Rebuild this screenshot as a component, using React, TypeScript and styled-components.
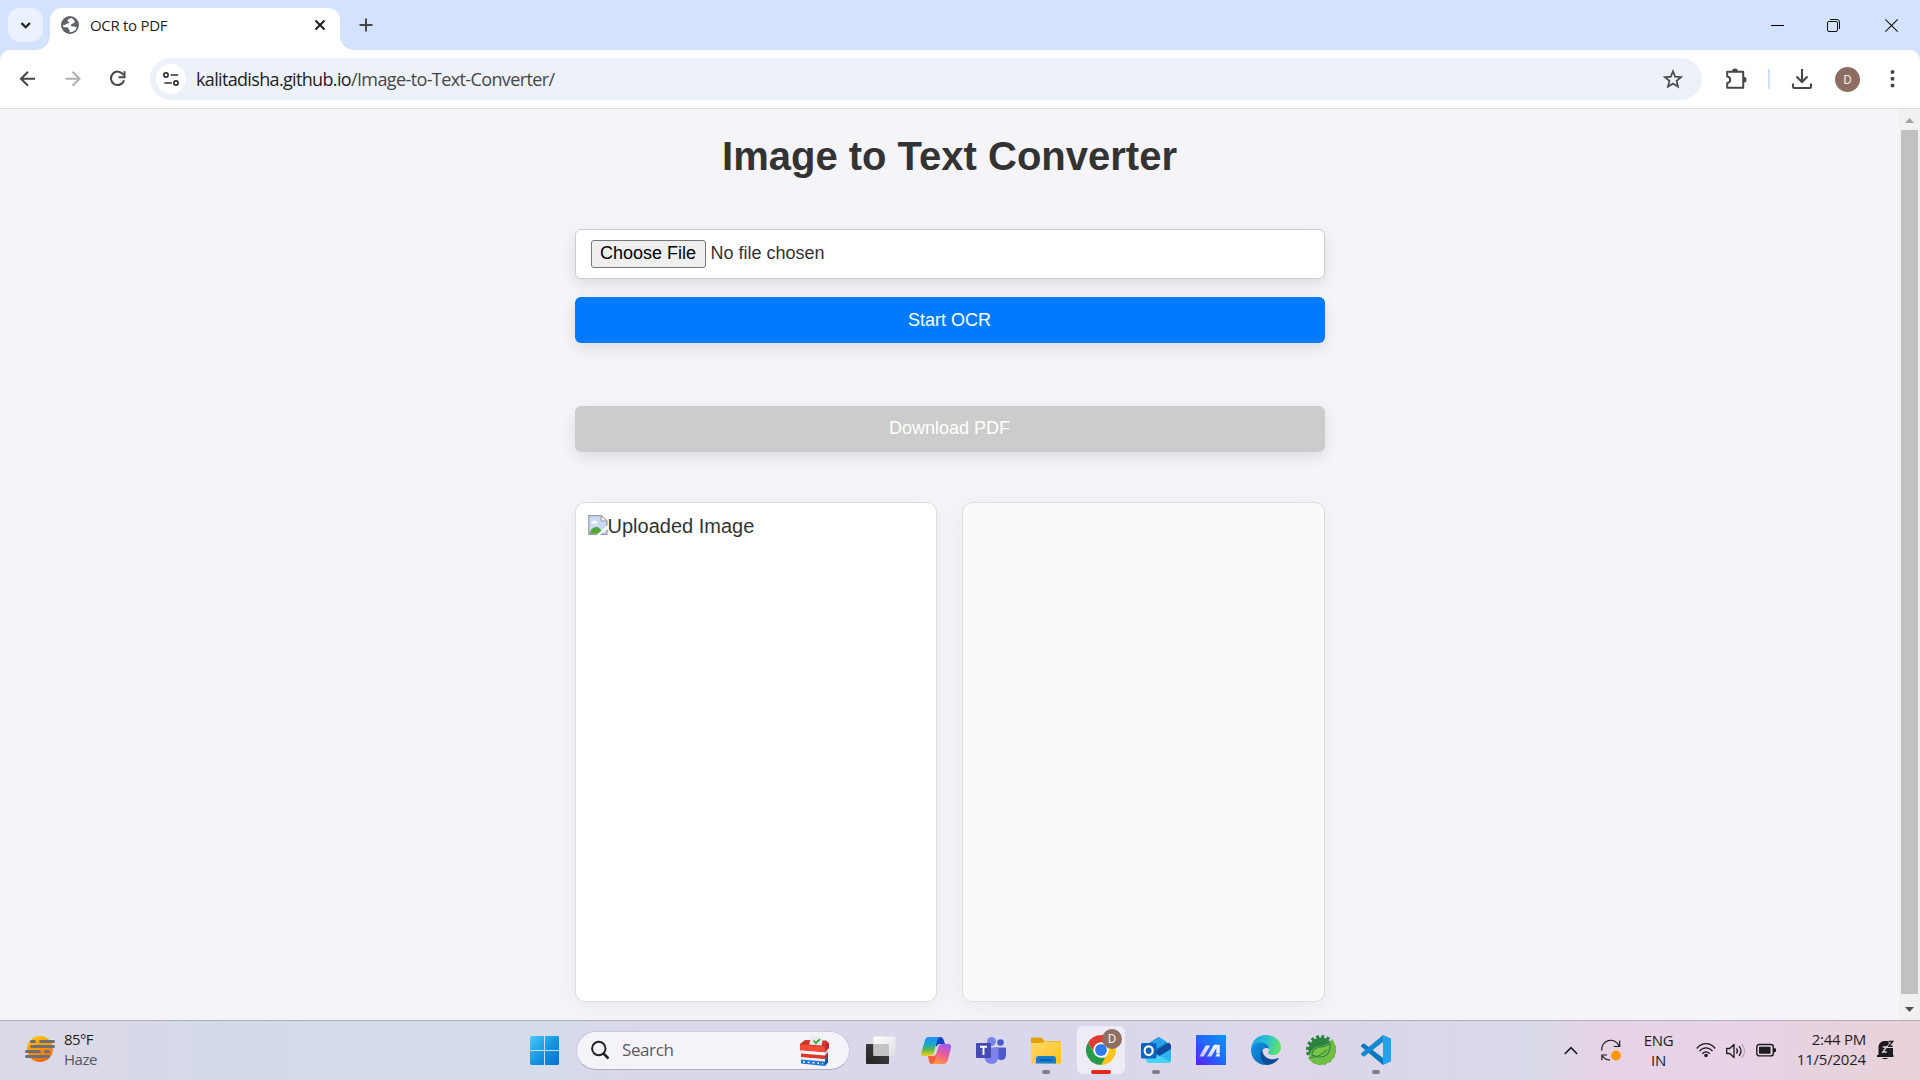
import React from 'react';
import styled, { createGlobalStyle, css } from 'styled-components';

const ui = `"Open Sans", "Noto Sans", sans-serif`;
const arial = `"Liberation Sans", Arial, sans-serif`;

const GlobalStyle = createGlobalStyle`
  *, *::before, *::after { box-sizing: border-box; }
  html, body { margin: 0; overflow: hidden; }
  svg { display: block; flex: none; overflow: visible; }
`;

const Screen = styled.div`
  width: 1920px;
  height: 1080px;
  display: flex;
  flex-direction: column;
  overflow: hidden;
  background: #d3e3fd;
  font-family: ${ui};
`;

const Label = styled.span<{ $size: number; $spacing?: number; $color?: string; $lh?: number }>`
  font-size: ${p => p.$size}px;
  letter-spacing: ${p => p.$spacing ?? 0}px;
  color: ${p => p.$color ?? '#1f1f1f'};
  line-height: ${p => p.$lh ?? 20}px;
  white-space: pre;
`;

/* ---------- tab strip ---------- */
const TabStrip = styled.div`
  height: 50px;
  flex: none;
  display: flex;
  padding: 8px 0 0 8px;
`;
const TabSearch = styled.div`
  width: 35px;
  height: 34px;
  border-radius: 12px;
  background: #ebf1fe;
  display: grid;
  place-items: center;
`;
const Tab = styled.div`
  position: relative;
  width: 290px;
  height: 42px;
  margin-left: 7px;
  padding: 0 13px 8px 11px;
  border-radius: 12px 12px 0 0;
  background: #fff;
  display: flex;
  align-items: center;
  gap: 11px;
  &::before, &::after {
    content: '';
    position: absolute;
    bottom: 0;
    width: 14px;
    height: 14px;
  }
  &::before { left: -14px; background: radial-gradient(circle at 0 0, transparent 13.5px, #fff 14.2px); }
  &::after { right: -14px; background: radial-gradient(circle at 100% 0, transparent 13.5px, #fff 14.2px); }
`;
const TabTitle = styled.div`
  flex: 1;
  display: flex;
`;
const NewTab = styled.div`
  width: 34px;
  height: 34px;
  margin-left: 9px;
  display: grid;
  place-items: center;
`;
const WindowButtons = styled.div`
  margin-left: auto;
  height: 34px;
  display: flex;
  align-items: center;
  gap: 43px;
  padding-right: 22px;
  & > :last-child { margin-left: 2px; }
`;

/* ---------- toolbar ---------- */
const Toolbar = styled.div`
  height: 59px;
  flex: none;
  display: flex;
  align-items: center;
  padding: 0 18px;
  background: #fff;
  border-radius: 10px 10px 0 0;
  border-bottom: 1px solid #dcdde0;
`;
const NavIcons = styled.div`
  display: flex;
  gap: 25px;
  width: 132px;
`;
const Omnibox = styled.div`
  width: 1552px;
  height: 42px;
  border-radius: 21px;
  padding: 0 19px 0 6px;
  background: #ecf1fa;
  display: flex;
  align-items: center;
`;
const SiteInfo = styled.div`
  width: 30px;
  height: 30px;
  border-radius: 50%;
  background: #fff;
  display: grid;
  place-items: center;
  margin-right: 10px;
`;
const Url = styled.div`
  flex: 1;
  display: flex;
  padding-bottom: 1px;
`;
const ToolbarEnd = styled.div`
  flex: 1;
  display: flex;
  align-items: center;
  padding-left: 23px;
`;
const Divider = styled.div`
  width: 2px;
  height: 20px;
  margin: 0 22px 0 21px;
  background: #cfe0fc;
`;
const Avatar = styled.div<{ $size: number }>`
  width: ${p => p.$size}px;
  height: ${p => p.$size}px;
  border-radius: 50%;
  background: #8d6e63;
  color: #f1e9e6;
  font: 400 13px/${p => p.$size}px Roboto, ${ui};
  text-align: center;
`;

/* ---------- web page ---------- */
const Viewport = styled.div`
  flex: 1;
  min-height: 0;
  display: flex;
  background: #f4f4f9;
`;
const Page = styled.main`
  flex: 1;
  display: flex;
  flex-direction: column;
  align-items: center;
  padding-top: 24px;
  color: #333;
  font-family: ${arial};
`;
const Title = styled.h1`
  margin: 0 0 50px;
  font-size: 40px;
  line-height: 46px;
  font-weight: 700;
`;
const shadow = css`box-shadow: 0 5px 15px rgba(0, 0, 0, 0.1);`;
const FileField = styled.div`
  width: 750px;
  height: 50px;
  padding: 0 15px;
  border: 1px solid #ccc;
  border-radius: 6px;
  background: #fff;
  ${shadow}
  display: flex;
  align-items: center;
  gap: 5px;
  font-size: 18px;
  line-height: 20px;
`;
const ChooseFile = styled.button`
  width: 115px;
  height: 28px;
  padding: 0 0 2px;
  border: 1px solid #767676;
  border-radius: 3px;
  background: #efefef;
  color: #000;
  font: 18px/20px ${arial};
  white-space: nowrap;
`;
const FileName = styled.span`
  padding-bottom: 2px;
`;
const Action = styled.button<{ $disabled?: boolean }>`
  width: 750px;
  height: 46px;
  margin-top: ${p => (p.$disabled ? 63 : 18)}px;
  padding: 0 0 ${p => (p.$disabled ? 3 : 1)}px;
  border: 0;
  border-radius: 6px;
  background: ${p => (p.$disabled ? '#ccc' : '#007bff')};
  color: #fff;
  font: 18px/20px ${arial};
  ${shadow}
`;
const Panels = styled.div`
  width: 750px;
  margin-top: 50px;
  display: grid;
  grid-template-columns: 1fr 1fr;
  gap: 25px;
`;
const Panel = styled.div<{ $bg: string }>`
  height: 500px;
  padding: 12px;
  border: 1px solid #ddd;
  border-radius: 10px;
  background: ${p => p.$bg};
  box-shadow: 0 5px 25px rgba(0, 0, 0, 0.05);
`;
const BrokenImage = styled.div`
  display: flex;
  font-size: 20px;
  line-height: 23px;
`;

const Scrollbar = styled.div`
  position: relative;
  width: 21px;
  background: #f1f1f1;
  display: flex;
  flex-direction: column;
  align-items: center;
`;
const Arrow = styled.div<{ $end?: boolean }>`
  height: ${p => (p.$end ? 26 : 21)}px;
  padding-top: ${p => (p.$end ? 4 : 2)}px;
  display: grid;
  place-items: center;
`;
const Thumb = styled.div`
  width: 17px;
  height: 864px;
  background: #c1c1c1;
`;

/* ---------- taskbar ---------- */
const Taskbar = styled.footer`
  height: 60px;
  flex: none;
  display: grid;
  grid-template-columns: 530px 861px 1fr;
  border-top: 1px solid #aeafb9;
  background: linear-gradient(90deg, #dbd9e8 0, #d9d9e8 120px, #d5dae9 200px, #d4dce9 520px, #d9d8ea 640px, #d8d8ea 1080px, #ddd7e9 1260px, #dcd7e8 1380px, #d9dae9 1530px, #e6d4e6 1600px, #e8d3e7 1730px, #e8d2dd 1850px, #e9d2d8 1920px);
`;
const Weather = styled.div`
  display: flex;
  align-items: center;
  gap: 9px;
  padding: 0 0 3px 25px;
`;
const Stack = styled.div<{ $align: string }>`
  display: flex;
  flex-direction: column;
  align-items: ${p => p.$align};
`;
const Center = styled.div`
  display: flex;
  align-items: center;
  padding-bottom: 1px;
`;
const SearchBox = styled.div`
  width: 274px;
  height: 39px;
  margin: 0 16px 0 17px;
  padding: 0 20px 0 14px;
  border: 1px solid #c9c9dd;
  border-bottom-color: #adadc2;
  border-radius: 20px;
  background: #f3f3f9;
  display: flex;
  align-items: center;
  gap: 13px;
  & > span { flex: 1; }
`;
const TaskButton = styled.div<{ $active?: boolean }>`
  position: relative;
  width: 48px;
  height: 48px;
  margin-right: 7px;
  border-radius: 6px;
  flex: none;
  display: grid;
  place-items: center;
  background: ${p => (p.$active ? '#eeedf7' : 'transparent')};
`;
const Apps = styled.div`
  display: flex;
  margin: 0 -16px 0 -9px;
`;
const Running = styled.div<{ $active?: boolean }>`
  position: absolute;
  bottom: 0;
  left: ${p => (p.$active ? 14 : 20)}px;
  width: ${p => (p.$active ? 20 : 8)}px;
  height: 4px;
  border-radius: 2px;
  background: ${p => (p.$active ? '#e5261f' : '#7f7d88')};
`;
const Badge = styled.div`
  position: absolute;
  left: 25px;
  top: 3px;
`;
const Tray = styled.div`
  display: flex;
  align-items: center;
  padding-left: 173px;
`;
const Gap = styled.div<{ $w: number }>`
  width: ${p => p.$w}px;
  flex: none;
`;
const Fixed = styled.div<{ $w: number; $align: string; $lift?: number }>`
  width: ${p => p.$w}px;
  flex: none;
  display: flex;
  flex-direction: column;
  align-items: ${p => p.$align};
  padding-bottom: ${p => p.$lift ?? 1}px;
`;

const S = ({ w, h = w, vb, children }: { w: number; h?: number; vb?: string; children: React.ReactNode }) => (
  <svg width={w} height={h} viewBox={vb ?? `0 0 ${w} ${h}`} fill="none">{children}</svg>
);

const Globe = () => (
  <S w={18}>
    <circle cx="9" cy="9" r="9" fill="#5f6368" />
    <path d="M9.8 1.9c-1 .7-3 1-3.200 2.600-.1 1.300 1.500 1 1.500 2.100 0 1.300-2 .6-3.300 2-.5.6-1.600.4-2.700.1 0 1 .1 1.700.5 2.600h3c1.700 0 2.100.7 2.100 1.800 0 .9 1 .9 1 1.900v1.100c3.300.3 6.300-1.700 7.200-4.900-1.200.3-1.500-.7-2.700-.7-1.300 0-2.700.3-3.100-.8-.4-1.200.6-2.200 1.900-2.200 1 0 .9-1.300 2.200-1.500C13.200 3.900 11.900 2.400 9.800 1.900z" fill="#fff" />
  </S>
);

const Ballot = () => (
  <S w={29} h={31}>
    <path d="M0 9 5 5l21 .5 3 2.500-2 4-27 1z" fill="#cf352b" />
    <path d="m12 .3 11 2.200-1.500 8L9 9.500z" fill="#e9ebee" />
    <path d="m13.500 5.500 2.300 2.700 4.200-4" stroke="#35a635" strokeWidth="1.700" />
    <path d="m0 9.500 25 2v6L0 15.500z" fill="#f04c38" />
    <path d="m25 11.500 4-3.500v5l-4 4.500z" fill="#b92b28" />
    <path d="m1 15.500 24 2V21L1 19z" fill="#f3f1f3" />
    <path d="m25 17.500 3-3.500v3.500L25 21z" fill="#c8c6d2" />
    <path d="m1 18.500 24 2v3.700l-24-2z" fill="#df3830" />
    <path d="m25 20.500 3-3v3.700l-3 3z" fill="#aa2525" />
    <path d="m1 22.200 24 2v2.300l-24-2z" fill="#f6f4f5" />
    <path d="m1 24.500 24 2V31L1 28.500z" fill="#1b76d6" />
    <path d="m25 24.200 3-3v6.300L25 31z" fill="#125aa8" />
    <path d="m3 26.800 20 1.800" stroke="#fff" strokeWidth="1.500" strokeDasharray="1.800 3" />
  </S>
);

const Copilot = () => (
  <S w={30}>
    <defs>
      <linearGradient id="cpA" x1="0" y1="0" x2="0" y2="1"><stop stopColor="#2590f4" /><stop offset=".35" stopColor="#16a5d8" /><stop offset=".65" stopColor="#55b94c" /><stop offset="1" stopColor="#f7cf1c" /></linearGradient>
      <linearGradient id="cpB" x1=".7" y1="0" x2=".3" y2="1"><stop stopColor="#a45cf0" /><stop offset=".5" stopColor="#ee5b96" /><stop offset="1" stopColor="#ff9a3c" /></linearGradient>
    </defs>
    <path d="M14 2h5c2 0 3 1 3.500 2.500L24 9h-5c-2 0-3 1-3.500 3L14 9z" fill="#1642c4" />
    <path d="M7 21h5c2 0 3-1 4-4l1.500 4-1.500 5c-.6 2-1.500 3-3 3h-2c-2 0-2.500-1-3-3z" fill="#f4623b" />
    <path d="M7.500 2H20c-2 0-3 1-3.600 3L13 17c-1 3-2 4-4 4H3C0 21 0 19 .5 17L4 5c.6-2 1.500-3 3.500-3z" fill="url(#cpA)" />
    <path d="M22.500 29H10c2 0 3-1 3.600-3L17 13c1-3 2-4 4-4h6c3 0 3.500 2 3 4l-3.500 13c-.8 2-2 3-4 3z" fill="url(#cpB)" />
  </S>
);

const Chrome = () => (
  <S w={30}>
    <circle cx="15" cy="15" r="15" fill="#fff" />
    <path d="M2 7.500A15 15 0 0 1 28 7.500H15a7.500 7.500 0 0 0-6.500 11.250z" fill="#e33b2e" />
    <path d="M2 7.500 8.500 18.750A7.500 7.500 0 0 0 15 22.500h6.500L15 30A15 15 0 0 1 2 7.500z" fill="#259b48" />
    <path d="M28 7.500A15 15 0 0 1 15 30l6.500-11.250A7.500 7.500 0 0 0 15 7.500z" fill="#fcc61e" />
    <circle cx="15" cy="15" r="7.500" fill="#fff" /><circle cx="15" cy="15" r="5.900" fill="#2f7bea" />
  </S>
);

const Outlook = () => (
  <S w={30}>
    <path d="m5 10 11-7c1-.6 2-.6 3 0l9 6v14H5z" fill="#1476c8" />
    <path d="m9 8 7.500-5.300c1-.6 1.500-.6 2.500 0L26 7 15 14z" fill="#29a3e8" />
    <path d="M15 20 30 11v14c0 2-1 3-3 3H15z" fill="#2fb5ee" />
    <path d="m14 16 14-8.500 2 2.500v4L15 23z" fill="#104a9e" />
    <path d="M5 21.500 15 19l14 7.500c-.6.800-1.500 1.500-3 1.500H9c-3 0-4-2-4-4z" fill="#47d3f6" />
    <rect y="8" width="15.500" height="15.500" rx="1.500" fill="#0f63bd" />
    <ellipse cx="7.700" cy="15.700" rx="4" ry="4.400" stroke="#fff" strokeWidth="2.200" />
  </S>
);

const Asus = () => (
  <S w={30}>
    <defs>
      <linearGradient id="as" x1="1" y1="0" x2="0" y2="1"><stop stopColor="#0796fb" /><stop offset=".5" stopColor="#2267fa" /><stop offset="1" stopColor="#5a1cf7" /></linearGradient>
      <linearGradient id="am" x1="1" y1="0" x2="0" y2="1"><stop stopColor="#fff" /><stop offset="1" stopColor="#b9b8fb" /></linearGradient>
    </defs>
    <path d="M0 0h30v30H0z" fill="url(#as)" />
    <path d="M3.200 21.500 9.700 10.500h4.500L7.700 21.500zM11 21.500 18 9.700h4.300L15.300 21.500z" fill="url(#am)" />
    <path d="M20.300 10h3.500v8.500h-3.500zM19.300 21.500l1.500-2.500h3v2.500z" fill="#e8edff" />
  </S>
);

const Edge = () => (
  <S w={30}>
    <defs>
      <linearGradient id="eg" x1="0" y1=".3" x2="1" y2=".5"><stop stopColor="#1c9fe0" /><stop offset=".5" stopColor="#2bc3d2" /><stop offset="1" stopColor="#62e362" /></linearGradient>
      <linearGradient id="eb" x1="0" y1="0" x2="1" y2="1"><stop stopColor="#1493e2" /><stop offset="1" stopColor="#0862b8" /></linearGradient>
    </defs>
    <path d="M0 14C1 5 7 0 15 0c9 0 15 6 15 12.500 0 5-4 7.500-8 7.500-3 0-5-1-5-2.200 0-.8 1.300-1.300 1.300-3.300C18.300 9.500 8 7 0 14z" fill="url(#eg)" />
    <path d="M0 15C1 10 5 7.500 9.500 7.500c5.500 0 8.800 3.500 8.800 7-2-3-8-1.500-8 4.500 0 6 5 9.500 9 9.500-1.300 1-3 1.500-4.300 1.500C6 30 0 23 0 15z" fill="url(#eb)" />
    <path d="M11.500 14C7 20 11 30 18 29.800c4-.6 7.500-3 9.500-6 .4-.7-.2-1-.8-.7-6.700 3.500-16-1-15.200-9.100z" fill="#114e97" />
  </S>
);

const Spring = () => (
  <S w={30}>
    <circle cx="15" cy="15" r="13.500" stroke="#2c8040" strokeWidth="3" strokeDasharray="3 2.300" />
    <circle cx="15" cy="15" r="12.500" fill="#2c8442" />
    <path d="M26 4c5 6 5.500 15 0 21-7 7-18 6-23-1 0-8 4-12 12-13 5-.7 8-2 11-7z" fill="#72bd43" />
    <path d="M6 20c0-5 4-7.500 9-8 4-.4 7-1 9-3.500.500 8-3 13.500-10 13.500-3 0-5-.6-6.500-1.400z" fill="#7bc447" stroke="#2c8442" strokeWidth="1.200" />
    <path d="M4 22.500c8-.5 13-3 17-8" stroke="#2c8442" strokeWidth="1.200" />
  </S>
);

const VsCode = () => (
  <S w={30}>
    <path d="m0 10.500 2-1.700c.5-.4 1-.4 1.500 0L22 23v7L.300 11.800c-.4-.4-.4-.9-.3-1.300z" fill="#0879bd" />
    <path d="m0 19.500 2 1.700c.5.400 1 .4 1.500 0L22 7V0L.300 18.200c-.4.400-.4.900-.3 1.300z" fill="#1389d0" />
    <path d="M22 0 30 3.500v23L22 30z" fill="#27a1ee" />
  </S>
);

const TaskView = () => (
  <S w={30}>
    <defs>
      <linearGradient id="tv" x1="1" y1="0" x2="0" y2="1"><stop stopColor="#484847" /><stop offset="1" stopColor="#222221" /></linearGradient>
      <linearGradient id="tw" x1="0" y1="0" x2="1" y2="1"><stop stopColor="#fff" /><stop offset="1" stopColor="#dedee2" /></linearGradient>
    </defs>
    <rect y="9" width="23" height="20" rx="1" fill="url(#tv)" />
    <rect x="7.500" y="1.500" width="22" height="19.500" rx="1" fill="url(#tw)" />
    <path d="M7.500 9H23v12H8.500a1 1 0 0 1-1-1z" fill="#c3c4c5" />
  </S>
);

const Teams = () => (
  <S w={30}>
    <circle cx="15.500" cy="6.500" r="4.500" fill="#7b83eb" /><circle cx="24.500" cy="7.500" r="3.300" fill="#5059c9" />
    <path d="M18 12.500h11c.6 0 1 .4 1 1V20c0 3-2 5-4.500 5S20 23 20 20z" fill="#5059c9" />
    <path d="M9 12.500h12.500c.6 0 1 .4 1 1V21c0 5-3 8-7 8s-7-3-7-7z" fill="#7b83eb" />
    <rect y="8" width="15" height="15" rx="1" fill="#4549b2" />
    <path d="M4 11.700h7M7.500 11.700V20" stroke="#fff" strokeWidth="1.900" />
  </S>
);

const Folder = () => (
  <S w={30}>
    <defs><linearGradient id="fo" x1="0" y1="0" x2="1" y2="1"><stop stopColor="#ffdc63" /><stop offset="1" stopColor="#fcbd28" /></linearGradient></defs>
    <path d="M0 3.500c0-.6.400-1 1-1h8c1 0 2 .4 3 1.500L13.500 6H29c.6 0 1 .4 1 1v5H0z" fill="#e1a10c" />
    <path d="M0 8h10c1 0 2-.5 3-1.500h17v22H0z" fill="url(#fo)" />
    <path d="M5 28.500V24c0-2 1-3 3-3h14c2 0 3 1 3 3v4.500z" fill="#1380cf" />
    <path d="M8.500 25h13" stroke="#0b529b" strokeWidth="1.300" />
  </S>
);

export default function App() {
  return (
    <Screen>
      <GlobalStyle />
      <TabStrip>
        <TabSearch>
          <S w={12}><path d="m1.500 4 4.200 4.200L9.900 4" stroke="#1f1f1f" strokeWidth="2.200" /></S>
        </TabSearch>
        <Tab>
          <Globe />
          <TabTitle><Label $size={15} $spacing={-0.3}>OCR to PDF</Label></TabTitle>
          <S w={14}><path d="m2.500 2.500 9 9m0-9-9 9" stroke="#1f1f1f" strokeWidth="2" /></S>
        </Tab>
        <NewTab>
          <S w={14}><path d="M7 .5v13M.5 7h13" stroke="#474747" strokeWidth="2" /></S>
        </NewTab>
        <WindowButtons>
          <S w={13}><path d="M0 6.500h13" stroke="#000" /></S>
          <S w={13}>
            <rect x=".5" y="2.500" width="10" height="10" rx="1.500" stroke="#111" />
            <path d="M3 .5h7a2.500 2.500 0 0 1 2.500 2.500v7" stroke="#111" />
          </S>
          <S w={13}><path d="m.3.3 12.400 12.400m0-12.400L.3 12.700" stroke="#111" strokeWidth="1.100" /></S>
        </WindowButtons>
      </TabStrip>

      <Toolbar>
        <NavIcons>
          <S w={20}><path d="M17 9.700H3.500M10 2.700l-7 7 7 7" stroke="#474747" strokeWidth="2" /></S>
          <S w={20}><path d="M2.500 9.700H16M9.500 2.700l7 7-7 7" stroke="#b0b0b0" strokeWidth="2" /></S>
          <S w={20}>
            <path d="M15.500 6A6.700 6.700 0 1 0 16.100 11.200" stroke="#474747" strokeWidth="2" />
            <path d="M16.500 2.200v6h-6" stroke="#474747" strokeWidth="2" />
          </S>
        </NavIcons>
        <Omnibox>
          <SiteInfo>
            <S w={16} h={14}>
              <circle cx="3" cy="3" r="2.100" stroke="#303030" strokeWidth="1.700" />
              <circle cx="13" cy="11" r="2.100" stroke="#303030" strokeWidth="1.700" />
              <path d="M7.700 3h7.500M1.300 11h7.500" stroke="#303030" strokeWidth="1.700" />
            </S>
          </SiteInfo>
          <Url>
            <Label $size={18} $spacing={-0.66} $lh={24}>kalitadisha.github.io</Label>
            <Label $size={18} $spacing={-0.61} $lh={24} $color="#474747">/Image-to-Text-Converter/</Label>
          </Url>
          <S w={20}><path d="m10 2.200 2.200 5.500 5.900.4-4.500 3.800 1.400 5.800-5-3.200-5 3.200 1.400-5.800L1.900 8.100l5.900-.4z" stroke="#474747" strokeWidth="1.700" /></S>
        </Omnibox>
        <ToolbarEnd>
          <S w={22}>
            <path d="M2.200 3.700h16v16h-16v-4.700c2.500-.3 3-1.500 3-3.300s-.5-3-3-3.300z" stroke="#474747" strokeWidth="2" strokeLinejoin="round" />
            <path d="M7 3.500a3 3 0 0 1 6 0zM18.500 8.700a3 3 0 0 1 0 6z" fill="#474747" />
          </S>
          <Divider />
          <S w={20}><path d="M10 0v12.500M4.500 7.500 10 13l5.500-5.500M1 14.500v3.200c0 .8.500 1.300 1.300 1.300h15.400c.8 0 1.300-.5 1.300-1.300v-3.200" stroke="#474747" strokeWidth="2.100" /></S>
          <Gap $w={23} />
          <Avatar $size={25}>D</Avatar>
          <Gap $w={22} />
          <S w={20}><circle cx="10.500" cy="3" r="2" fill="#474747" /><circle cx="10.500" cy="9.800" r="2" fill="#474747" /><circle cx="10.500" cy="16.600" r="2" fill="#474747" /></S>
        </ToolbarEnd>
      </Toolbar>

      <Viewport>
        <Page>
          <Title>Image to Text Converter</Title>
          <FileField>
            <ChooseFile>Choose File</ChooseFile>
            <FileName>No file chosen</FileName>
          </FileField>
          <Action>Start OCR</Action>
          <Action $disabled>Download PDF</Action>
          <Panels>
            <Panel $bg="#fff">
              <BrokenImage>
                <S w={20}>
                  <path d="M.8.600h12.400L19 6v13.300H.8z" fill="#c9dbf6" stroke="#9a9a9a" strokeWidth="1.200" />
                  <path d="M13.200.600V6H19z" fill="#fff" stroke="#9a9a9a" />
                  <path d="M3 8c0-1 1-1.500 1.800-1.300C5.200 5 8 5 8.300 7c1 0 1.500.8 1.200 1.500H3z" fill="#fff" />
                  <path d="M1.500 18.700c1-4 4-6.700 7-6.700 3 0 5 3 6 6.700z" fill="#57a639" />
                  <path d="M20 10 8.500 20H12l8-6.500z" fill="#fff" />
                </S>
                Uploaded Image
              </BrokenImage>
            </Panel>
            <Panel $bg="#fafafa" />
          </Panels>
        </Page>
        <Scrollbar>
          <Arrow><S w={9} h={5}><path d="m0 5 4.500-5L9 5z" fill="#a3a3a3" /></S></Arrow>
          <Thumb />
          <Arrow $end><S w={9} h={5}><path d="m0 0 4.500 5L9 0z" fill="#505050" /></S></Arrow>
        </Scrollbar>
      </Viewport>

      <Taskbar>
        <Weather>
          <S w={30} h={26}>
            <defs><linearGradient id="sun" x1=".2" y1="0" x2=".6" y2="1"><stop stopColor="#fdc90b" /><stop offset="1" stopColor="#ee6712" /></linearGradient></defs>
            <circle cx="15" cy="13" r="13" fill="url(#sun)" />
            <path d="M6.500 5.500h3M15.500 5.500h13M6.500 10.500h22M1.500 15.500h13M20.500 15.500h3M1.500 20.500h22" stroke="#706e72" strokeWidth="3" strokeLinecap="round" />
          </S>
          <Stack $align="flex-start">
            <Label $size={15} $spacing={-0.6}>85°F</Label>
            <Label $size={15} $spacing={-0.5} $color="#57565d">Haze</Label>
          </Stack>
        </Weather>
        <Center>
          <S w={29}>
            <defs><linearGradient id="win" x1="0" y1="0" x2="1" y2="1"><stop stopColor="#4ac9fb" /><stop offset=".5" stopColor="#1697e2" /><stop offset="1" stopColor="#0070d0" /></linearGradient></defs>
            <path d="M1 0h13v14H0V1zM15 0h13l1 1v13H15zM0 15h14v14H1l-1-1zM15 15h14v13l-1 1H15z" fill="url(#win)" />
          </S>
          <SearchBox>
            <S w={18}><circle cx="7.800" cy="7.500" r="6.700" stroke="#222" strokeWidth="2" /><path d="m12.500 12.500 5 5" stroke="#222" strokeWidth="2.500" /></S>
            <Label $size={17} $spacing={-0.4} $color="#5c5b62" $lh={22}>Search</Label>
            <Ballot />
          </SearchBox>
          <Apps>
            <TaskButton><TaskView /></TaskButton>
            <TaskButton><Copilot /></TaskButton>
            <TaskButton><Teams /></TaskButton>
            <TaskButton><Folder /><Running /></TaskButton>
            <TaskButton $active><Chrome /><Badge><Avatar $size={20}>D</Avatar></Badge><Running $active /></TaskButton>
            <TaskButton><Outlook /><Running /></TaskButton>
            <TaskButton><Asus /></TaskButton>
            <TaskButton><Edge /></TaskButton>
            <TaskButton><Spring /></TaskButton>
            <TaskButton><VsCode /><Running /></TaskButton>
          </Apps>
        </Center>
        <Tray>
          <S w={14} h={8}><path d="m.8 7 6.200-6.300 6.200 6.300" stroke="#1c1b1f" strokeWidth="1.600" /></S>
          <Gap $w={23} />
          <S w={20}>
            <path d="M.7 9.500A9 9 0 0 1 18 5M18.700-.5v6h-6M.9 19.200V14h5.200M1.500 15C3.500 18 6 18.900 9 18.900" stroke="#1c1b1f" strokeWidth="1.200" />
            <circle cx="15" cy="14.500" r="5" fill="#ff9606" />
          </S>
          <Fixed $w={75} $align="center">
            <Label $size={15} $spacing={-0.3}>ENG</Label>
            <Label $size={15} $spacing={-0.3}>IN</Label>
          </Fixed>
          <S w={20} h={15}>
            <path d="M.8 5.500C6-.9 14-.9 19.200 5.500M3.500 8.200c3.700-4.500 9.300-4.500 13 0M6.300 10.700c2.200-2.500 5.200-2.500 7.400 0" stroke="#1c1b1f" strokeWidth="1.300" />
            <circle cx="10" cy="12.500" r="1.800" fill="#1c1b1f" />
          </S>
          <Gap $w={10} />
          <S w={20} h={16}>
            <path d="M.7 5.500h3L8 1.500v13l-4.300-4h-3z" stroke="#1c1b1f" strokeWidth="1.300" strokeLinejoin="round" />
            <path d="M10.500 5.500c1.200 1.500 1.200 3.500 0 5M13 3.200c2.500 3 2.500 6.600 0 9.600" stroke="#1c1b1f" strokeWidth="1.300" />
            <path d="M15.700 1c3.500 4.300 3.500 9.700 0 14" stroke="#b4a5b8" strokeWidth="1.200" />
          </S>
          <Gap $w={10} />
          <S w={20} h={13}>
            <rect x=".8" y=".5" width="16.500" height="11.400" rx="2.500" stroke="#1c1b1f" strokeWidth="1.400" />
            <rect x="3" y="2.700" width="11.500" height="7" rx=".5" fill="#1c1b1f" />
            <path d="M18 4.200h.8c.7 0 1.200.5 1.200 1.200V7c0 .7-.5 1.200-1.200 1.200H18z" fill="#1c1b1f" />
          </S>
          <Fixed $w={90} $align="flex-end" $lift={3}>
            <Label $size={15} $spacing={-0.25}>2:44 PM</Label>
            <Label $size={15} $spacing={-0.2}>11/5/2024</Label>
          </Fixed>
          <Gap $w={11} />
          <S w={17} h={19}>
            <path d="M0 14h1.500V6.500C1.500 2.500 4 0 8 0h4v5.500h4V14h.500v2H0zM5 17h6c-.6 1.500-5.400 1.500-6 0z" fill="#1c1b1f" />
            <path d="M11.500.500h4.500l-4.500 5h4.500" stroke="#e8d2da" strokeWidth="3" />
            <path d="M11.700.500h4l-4 4.800h4" stroke="#1c1b1f" strokeWidth="1.400" />
            <path d="M5.700 6h4l-4 5h4" stroke="#e8d2da" strokeWidth="1.300" />
          </S>
        </Tray>
      </Taskbar>
    </Screen>
  );
}
